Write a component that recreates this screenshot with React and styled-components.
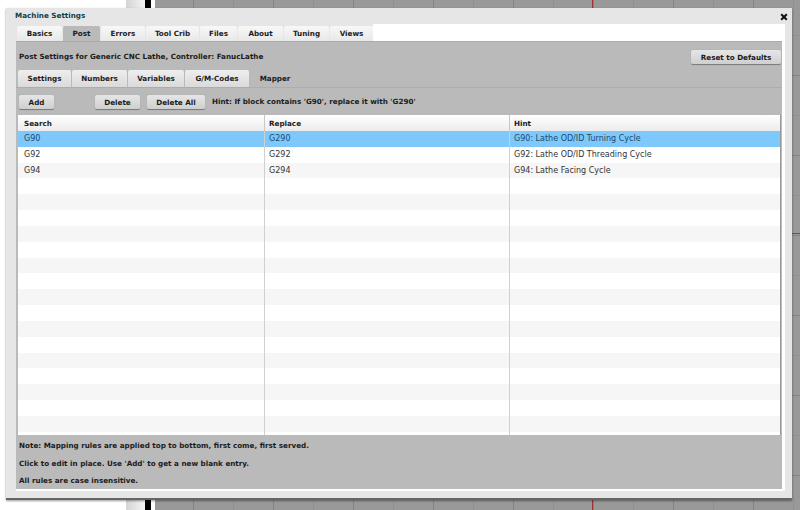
import styled, { createGlobalStyle } from "styled-components";

const mainTabs = ["Basics", "Post", "Errors", "Tool Crib", "Files", "About", "Tuning", "Views"];
const subTabs = ["Settings", "Numbers", "Variables", "G/M-Codes", "Mapper"];
const rules = [
  ["G90", "G290", "G90: Lathe OD/ID Turning Cycle"],
  ["G92", "G292", "G92: Lathe OD/ID Threading Cycle"],
  ["G94", "G294", "G94: Lathe Facing Cycle"],
];
const rows = Array.from({ length: 19 }, (_, i) => rules[i] || ["", "", ""]);

const Global = createGlobalStyle`
  html, body {
    margin: 0;
    height: 510px;
    overflow: hidden;
    background: #999;
  }
  * { box-sizing: border-box; }
`;

const Desktop = styled.div`
  position: relative;
  width: 800px;
  height: 510px;
  overflow: hidden;
  display: flex;
  font-family: "DejaVu Sans", Verdana, sans-serif;
  font-size: 7.2px;
  color: #1c1c1c;
`;

const Margin = styled.div`
  width: 126px;
  background: #fff;
`;

const Ruler = styled.div`
  width: 19px;
  background: linear-gradient(90deg, #d4d4d4, #f4f4f4);
`;

const BlackBar = styled.div`
  width: 6px;
  background: #000;
`;

const WhiteGap = styled.div`
  width: 4px;
  background: #fff;
`;

const Canvas = styled.div`
  position: relative;
  flex: 1;
  background-color: #999;
  background-image:
    linear-gradient(90deg, #848484 1px, transparent 1px),
    linear-gradient(#848484 1px, transparent 1px),
    linear-gradient(90deg, #919191 1px, transparent 1px),
    linear-gradient(#919191 1px, transparent 1px);
  background-size: 80px 80px, 80px 80px, 40px 40px, 40px 40px;
  background-position: 38px -5px, 38px -5px, 38px -5px, 38px -5px;

  /* red vertical axis */
  &::before {
    content: "";
    position: absolute;
    left: 437px;
    top: 0;
    width: 1px;
    height: 100%;
    background: #a03030;
  }

  /* blue horizontal axis */
  &::after {
    content: "";
    position: absolute;
    left: 0;
    top: 233px;
    width: 100%;
    height: 1px;
    background: #50508c;
  }
`;

const Window = styled.div`
  position: absolute;
  left: 6px;
  top: 8px;
  width: 786px;
  height: 492px;
  background: #e6e6e6;
  border-bottom: 2px solid #666;
  box-shadow: 0 1px 2px rgba(0, 0, 0, 0.4);
  display: flex;
  flex-direction: column;
`;

const TitleBar = styled.div`
  height: 16px;
  padding: 0 4px 2px 9px;
  display: flex;
  align-items: center;
  justify-content: space-between;
  font-weight: bold;
  color: #12404a;
`;

const CloseIcon = styled.svg`
  width: 8px;
  height: 8px;
  margin-top: 3px;
`;

const Content = styled.div`
  flex: 1;
  margin: 0 7px 7px 10px;
  background: #fff;
  display: flex;
  flex-direction: column;
`;

const MainTabBar = styled.div`
  display: flex;
  height: 17px;
`;

const MainTabGroup = styled.div`
  display: flex;
  gap: 1px;
  padding: 2px 0 0 1px;
  background: #e6e6e6;
`;

const MainTab = styled.div`
  display: flex;
  align-items: center;
  justify-content: center;
  font-weight: bold;
  border-radius: 2px 2px 0 0;
  background: ${({ $active }) => ($active ? "#bababa" : "linear-gradient(#f8f8f8, #e8e8e8)")};
  width: ${({ $width }) => $width}px;
`;

const Panel = styled.div`
  flex: 1;
  margin: 0 3px 2px 0;
  background: #bababa;
  border-top: 1px solid #ababab;
  display: flex;
  flex-direction: column;
`;

const PostHeader = styled.div`
  height: 28px;
  padding: 8px 1px 0 3px;
  display: flex;
  justify-content: space-between;
  align-items: flex-start;
  font-weight: bold;
`;

const PostTitle = styled.div`
  margin-top: 2px;
`;

const Button = styled.div`
  height: 15px;
  display: flex;
  align-items: center;
  justify-content: center;
  font-weight: bold;
  border-radius: 2px;
  background: linear-gradient(#e6e6e6, #cfcfcf);
  border-bottom: 1px solid #7d7d7d;
  box-shadow: 0 0 1px #8a8a8a;
  width: ${({ $width }) => $width}px;
  margin-left: ${({ $gap }) => $gap || 0}px;
`;

const SubTabBar = styled.div`
  height: 18px;
  padding-left: 2px;
  display: flex;
  gap: 1px;
  border-bottom: 1px solid #adadad;
`;

const SubTab = styled.div`
  width: ${({ $width }) => $width}px;
  display: flex;
  align-items: center;
  justify-content: center;
  font-weight: bold;
  border-radius: 2px 2px 0 0;
  background: ${({ $active }) => ($active ? "#bababa" : "linear-gradient(#eeeeee, #dadada)")};
`;

const ActionBar = styled.div`
  height: 27px;
  padding: 7px 0 0 3px;
  display: flex;
  align-items: flex-start;
`;

const Hint = styled.div`
  margin: 2px 0 0 7px;
  font-weight: bold;
`;

const Table = styled.div`
  height: 320px;
  margin: 0 1px 0 2px;
  background: #fff;
  border-right: 1px solid #9a9a9a;
  display: flex;
  flex-direction: column;
`;

const Grid = styled.div`
  display: grid;
  grid-template-columns: 247px 245px 1fr;
  height: ${({ $height }) => $height};
  background: ${({ $bg }) => $bg};
  color: ${({ $color }) => $color || "inherit"};
`;

const HeadCell = styled.div`
  padding-left: 4px;
  display: flex;
  align-items: center;
  font-weight: bold;
  border-right: 1px solid #c8c8c8;
  &:first-child { padding-left: 6px; }
  &:last-child { border-right: 0; }
`;

const Cell = styled.div`
  padding-left: 4px;
  display: flex;
  align-items: center;
  font-size: 8px;
  padding-bottom: 1px;
  color: ${({ $plain }) => ($plain ? "#333" : "inherit")};
  border-right: 1px solid #d0d0d0;
  &:first-child { padding-left: 6px; }
  &:last-child { border-right: 0; }
`;

const Filler = styled(Grid)`
  flex: 1;
`;

const Notes = styled.div`
  flex: 1;
  padding: 7px 0 0 3px;
  display: flex;
  flex-direction: column;
  gap: 9px;
  font-weight: bold;
  line-height: 8.6px;
`;

const tabWidths = [45, 37, 44, 53, 37, 45, 45, 43];
const subWidths = [53, 55, 56, 64, 50];

export default function App() {
  return (
    <>
      <Global />
      <Desktop>
        <Margin />
        <Ruler />
        <BlackBar />
        <WhiteGap />
        <Canvas />
        <Window>
          <TitleBar>
            Machine Settings
            <CloseIcon viewBox="0 0 8 8">
              <path d="M1.2 1.2l5.6 5.6M6.8 1.2L1.2 6.8" stroke="#111" strokeWidth="2" />
            </CloseIcon>
          </TitleBar>
          <Content>
            <MainTabBar>
              <MainTabGroup>
                {mainTabs.map((t, i) => (
                  <MainTab key={t} $active={t === "Post"} $width={tabWidths[i]}>{t}</MainTab>
                ))}
              </MainTabGroup>
            </MainTabBar>
            <Panel>
              <PostHeader>
                <PostTitle>Post Settings for Generic CNC Lathe, Controller: FanucLathe</PostTitle>
                <Button $width={90}>Reset to Defaults</Button>
              </PostHeader>
              <SubTabBar>
                {subTabs.map((t, i) => (
                  <SubTab key={t} $active={t === "Mapper"} $width={subWidths[i]}>{t}</SubTab>
                ))}
              </SubTabBar>
              <ActionBar>
                <Button $width={35}>Add</Button>
                <Button $width={45} $gap={41}>Delete</Button>
                <Button $width={58} $gap={7}>Delete All</Button>
                <Hint>Hint: If block contains 'G90', replace it with 'G290'</Hint>
              </ActionBar>
              <Table>
                <Grid $height="16px" $bg="linear-gradient(#fff, #ececec)">
                  <HeadCell>Search</HeadCell>
                  <HeadCell>Replace</HeadCell>
                  <HeadCell>Hint</HeadCell>
                </Grid>
                {rows.map((r, i) => (
                  <Grid
                    key={i}
                    $height="15.83px"
                    $bg={i === 0 ? "#7ec8fc" : i % 2 ? "#fff" : "#f6f6f6"}
                    $color={i === 0 ? "#1a4a6a" : undefined}
                  >
                    <Cell $plain={i !== 0}>{r[0]}</Cell>
                    <Cell $plain={i !== 0}>{r[1]}</Cell>
                    <Cell $plain={i !== 0}>{r[2]}</Cell>
                  </Grid>
                ))}
                <Filler $bg="#fff">
                  <Cell />
                  <Cell />
                  <Cell />
                </Filler>
              </Table>
              <Notes>
                <div>Note: Mapping rules are applied top to bottom, first come, first served.</div>
                <div>Click to edit in place. Use 'Add' to get a new blank entry.</div>
                <div>All rules are case insensitive.</div>
              </Notes>
            </Panel>
          </Content>
        </Window>
      </Desktop>
    </>
  );
}
